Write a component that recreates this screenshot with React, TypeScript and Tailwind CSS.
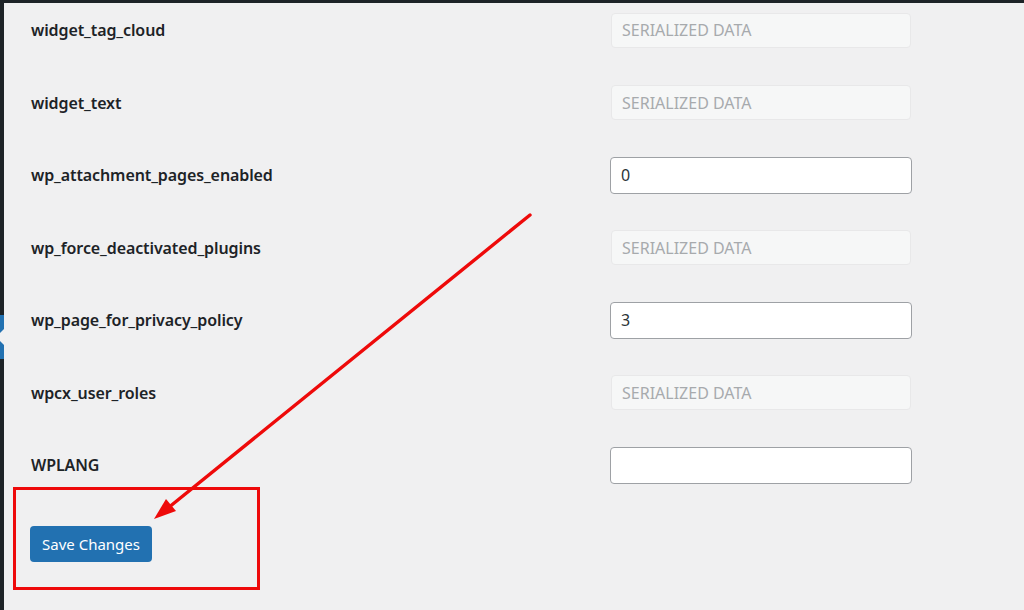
import React from "react";

type Row = { label: string; value?: string; serialized?: boolean };

const rows: Row[] = [
  { label: "widget_tag_cloud", serialized: true },
  { label: "widget_text", serialized: true },
  { label: "wp_attachment_pages_enabled", value: "0" },
  { label: "wp_force_deactivated_plugins", serialized: true },
  { label: "wp_page_for_privacy_policy", value: "3" },
  { label: "wpcx_user_roles", serialized: true },
  { label: "WPLANG", value: "" },
];

export default function App() {
  return (
    <div
      className="relative w-[1024px] h-[610px] overflow-hidden bg-[#1d2327] flex flex-col"
      style={{ fontFamily: '"Noto Sans", "Open Sans", sans-serif' }}
    >
      <div className="h-[3px] shrink-0" />
      <div className="flex flex-1 min-h-0">
        <div className="w-[4px] shrink-0 flex flex-col">
          <div className="h-[312px]" />
          <div className="relative h-[44px] bg-[#2271b1]">
            <div className="absolute right-0 top-[14px] w-0 h-0 border-y-[8px] border-y-transparent border-r-[8px] border-r-[#f0f0f1]" />
          </div>
        </div>
        <div className="flex-1 bg-[#f0f0f1] pl-[26px] pt-[9px]">
          <div className="flex flex-col gap-y-[36.5px]">
            {rows.map((r) => (
              <div key={r.label} className="flex items-center h-[36px]">
                <div className="w-[580px] pl-[1px] text-[16px] font-[560] text-[#1d2327] tracking-[-0.1px]">
                  {r.label}
                </div>
                {r.serialized ? (
                  <div className="w-[300px] h-[35px] ml-[1px] rounded-[4px] bg-[#f6f7f7] border border-[#e8e8e9] flex items-center px-[10px] text-[16px] text-[#a7aaad]">
                    SERIALIZED DATA
                  </div>
                ) : (
                  <div className="w-[302px] h-[37px] rounded-[4px] bg-white border border-[#9ea1a5] flex items-center px-[10px] text-[16px] text-[#2c3338]">
                    {r.value}
                  </div>
                )}
              </div>
            ))}
          </div>
          <div className="mt-[43px]">
            <button className="h-[36px] w-[122px] rounded-[4px] bg-[#2271b1] text-white text-[15px] flex items-center justify-center">
              Save Changes
            </button>
          </div>
        </div>
      </div>

      <div className="absolute left-[13px] top-[487px] w-[247px] h-[103px] border-[3px] border-[#ee0a0a]" />
      <svg className="absolute left-0 top-0 pointer-events-none" width="1024" height="610">
        <line x1="530" y1="215" x2="168" y2="508" stroke="#ee0a0a" strokeWidth="3.4" strokeLinecap="round" />
        <polygon points="154,519 166,499 176,511" fill="#ee0a0a" />
      </svg>
    </div>
  );
}
